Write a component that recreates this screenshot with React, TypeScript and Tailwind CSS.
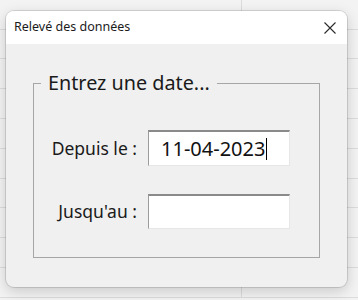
import { useState } from 'react'

const rowHeights = [30, 29, 30, 30, 30, 30, 29, 30, 30, 30]

function CloseIcon() {
  return (
    <svg width="12" height="12" viewBox="0 0 12 12" className="block">
      <path d="M0.5 0.5 L11.5 11.5 M11.5 0.5 L0.5 11.5" stroke="#2b2b2b" strokeWidth="1.1" fill="none" />
    </svg>
  )
}

export default function App() {
  const [from] = useState('11-04-2023')
  const [to] = useState('')

  return (
    <div className="relative h-[300px] w-[358px] overflow-hidden bg-[#f3f3f3] font-['Noto_Sans',sans-serif]">
      {/* Spreadsheet behind the dialog */}
      <div className="flex flex-col">
        {rowHeights.map((h, i) => (
          <div
            key={i}
            className={`flex border-b border-[#dcdcdc] ${h === 30 ? 'h-[30px]' : 'h-[29px]'}`}
          >
            <div className="w-[242px] border-r border-[#dcdcdc]" />
            <div className="flex-1" />
          </div>
        ))}
      </div>

      {/* Dialog window */}
      <div className="absolute left-[6px] top-[11px] flex h-[276px] w-[341px] flex-col overflow-hidden rounded-[8px] bg-[#f0f0f0] shadow-[0_0_0_1px_rgba(0,0,0,0.12),0_4px_14px_rgba(0,0,0,0.18)]">
        {/* Title bar */}
        <div className="flex h-[33px] shrink-0 items-center justify-between bg-white pl-[8px] pr-[7px]">
          <span className="text-[12.5px] text-[#1b1b1b]">Relevé des données</span>
          <button className="flex h-[20px] w-[20px] items-center justify-center">
            <CloseIcon />
          </button>
        </div>

        {/* Body */}
        <div className="px-[27px] pt-[28px]">
          <fieldset className="border border-[#a6a6a6] pb-[28px] pt-[36px]">
            <legend className="ml-[7px] px-[7px] text-[19.8px] leading-[22px] text-[#1a1a1a]">
              Entrez une date...
            </legend>

            {/* Depuis le */}
            <div className="flex items-center">
              <label className="w-[103px] text-right text-[17.5px] text-[#1a1a1a]">Depuis le :</label>
              <div className="ml-[11px] flex h-[36px] w-[142px] items-center border-b border-l border-r border-t-2 border-b-[#e6e6e6] border-l-[#9c9c9c] border-r-[#e6e6e6] border-t-[#8a8a8a] bg-white pl-[12px]">
                <span className="text-[20px] leading-[24px] text-[#111]">{from}</span>
                <span className="ml-[1px] h-[22px] w-[1px] bg-black" />
              </div>
            </div>

            {/* Jusqu'au */}
            <div className="mt-[28px] flex items-center">
              <label className="w-[103px] text-right text-[17.5px] text-[#1a1a1a]">Jusqu'au :</label>
              <div className="ml-[11px] flex h-[35px] w-[142px] items-center border-b border-l border-r border-t-2 border-b-[#e6e6e6] border-l-[#9c9c9c] border-r-[#e6e6e6] border-t-[#8a8a8a] bg-white pl-[12px]">
                <span className="text-[20px] leading-[24px] text-[#111]">{to}</span>
              </div>
            </div>
          </fieldset>
        </div>
      </div>
    </div>
  )
}
